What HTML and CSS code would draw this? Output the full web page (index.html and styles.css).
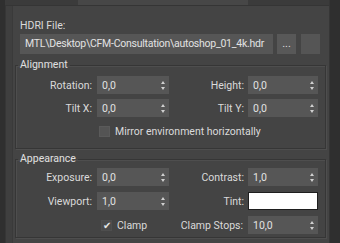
FILE: index.html
```html
<!DOCTYPE html>
<html lang="en">

<head>
    <meta charset="UTF-8">
    <title>HDRI Map Parameters</title>
    <link rel="stylesheet" href="styles.css">
</head>

<body>
    <div class="rollout">
        <div class="inner">
            <div class="topbar"><div class="tab"></div></div>

            <div class="file-block">
                <div class="caption">HDRI File:</div>
                <div class="file-row">
                    <div class="path">MTL\Desktop\CFM-Consultation\autoshop_01_4k.hdr</div>
                    <button class="btn">...</button>
                    <button class="btn blank"></button>
                </div>
            </div>

            <fieldset class="group align">
                <legend>Alignment</legend>
                <div class="grid">
                    <label class="lbl">Rotation:</label>
                    <div class="spin"><span>0,0</span><i class="arrows"></i></div>
                    <label class="lbl">Height:</label>
                    <div class="spin"><span>0,0</span><i class="arrows"></i></div>

                    <label class="lbl">Tilt X:</label>
                    <div class="spin"><span>0,0</span><i class="arrows"></i></div>
                    <label class="lbl">Tilt Y:</label>
                    <div class="spin"><span>0,0</span><i class="arrows"></i></div>

                    <div class="check-row wide">
                        <span class="box"></span>
                        <span>Mirror environment horizontally</span>
                    </div>
                </div>
            </fieldset>

            <fieldset class="group look">
                <legend>Appearance</legend>
                <div class="grid">
                    <label class="lbl">Exposure:</label>
                    <div class="spin"><span>0,0</span><i class="arrows"></i></div>
                    <label class="lbl">Contrast:</label>
                    <div class="spin"><span>1,0</span><i class="arrows"></i></div>

                    <label class="lbl">Viewport:</label>
                    <div class="spin"><span>1,0</span><i class="arrows"></i></div>
                    <label class="lbl">Tint:</label>
                    <div class="swatch"></div>

                    <div class="check-row">
                        <span class="box checked">&#10004;</span>
                        <span>Clamp</span>
                    </div>
                    <label class="lbl">Clamp Stops:</label>
                    <div class="spin"><span>10,0</span><i class="arrows"></i></div>
                </div>
            </fieldset>
        </div>
    </div>
</body>

</html>
```

FILE: styles.css
```css
body {
    margin: 0;
    padding: 0;
    background-color: #2f2f2f;
    font-family: Roboto, "Liberation Sans", sans-serif;
    font-size: 10.5px;
    color: #dadada;
    height: 243px;
    overflow: hidden;
}

.rollout {
    margin-left: 5px;
    width: 325px;
    height: 243px;
    box-sizing: border-box;
    background-color: #3f3f3f;
    border-left: 1px solid #363636;
    border-right: 1px solid #363636;
    padding-left: 6px;
}

.inner {
    height: 100%;
    background-color: #444;
    border-left: 1px solid #3a3a3a;
    padding-left: 2px;
    padding-right: 3px;
}

.topbar {
    height: 5px;
    margin-left: -10px;
    margin-right: -3px;
    background-color: #3b3b3b;
    border-bottom: 1px solid #353535;
}

.tab {
    margin-left: 73px;
    width: 170px;
    height: 5px;
    background-color: #474747;
}

/* file picker */
.file-block {
    padding-left: 5px;
}

.caption {
    margin-top: 12px;
    line-height: 15px;
}

.file-row {
    display: flex;
    align-items: center;
    margin-top: 1px;
    height: 20px;
}

.path {
    width: 253px;
    height: 20px;
    line-height: 20px;
    padding-left: 5px;
    box-sizing: border-box;
    background-color: #565656;
    white-space: nowrap;
    overflow: hidden;
    letter-spacing: -0.25px;
    color: #e2e2e2;
}

.btn {
    margin-left: 4px;
    width: 19px;
    height: 20px;
    padding: 0;
    border: none;
    background-color: #585858;
    color: #dcdcdc;
    font-family: inherit;
    font-size: 11px;
    line-height: 16px;
}

.btn.blank {
    margin-left: 5px;
    background-color: #555;
}

/* groups */
.group {
    margin: 5px 0 0 0;
    padding: 0;
    border: 1px solid #363636;
    box-shadow: inset 1px 1px 0 #4e4e4e, 1px 1px 0 #4e4e4e;
}

.group legend {
    margin-left: 2px;
    padding: 0 2px;
    line-height: 12px;
    color: #e0e0e0;
}

.grid {
    display: grid;
    grid-template-columns: 81px 72px 79px 70px;
    align-items: center;
}

.align .grid {
    padding: 5px 0 8px;
    row-gap: 5px;
}

.look {
    margin-top: 4px;
}

.look .grid {
    padding: 3px 0 3px;
    row-gap: 6px;
}

.lbl {
    text-align: right;
    padding-right: 5px;
    white-space: nowrap;
}

.grid .lbl:nth-of-type(even) {
    padding-right: 4px;
}

.spin {
    display: flex;
    align-items: center;
    justify-content: space-between;
    height: 18px;
    padding: 0 5px 0 5px;
    background-color: #565656;
    color: #e2e2e2;
}

.arrows {
    width: 0;
    height: 9px;
    position: relative;
    display: block;
}

.arrows::before,
.arrows::after {
    content: "";
    position: absolute;
    left: -3px;
    border-left: 2.5px solid transparent;
    border-right: 2.5px solid transparent;
}

.arrows::before {
    top: 0;
    border-bottom: 3px solid #d0d0d0;
}

.arrows::after {
    bottom: 0;
    border-top: 3px solid #d0d0d0;
}

.swatch {
    height: 18px;
    box-sizing: border-box;
    background-color: #fff;
    border: 1px solid #1e1e1e;
}

.check-row {
    grid-column: 2;
    display: flex;
    align-items: center;
    gap: 5px;
    height: 18px;
    padding-left: 4px;
}

.check-row.wide {
    grid-column: 2 / span 3;
    padding-left: 2px;
}

.box {
    width: 11px;
    height: 11px;
    box-sizing: border-box;
    background-color: #545454;
    border: 1px solid #5a5a5a;
    font-size: 10px;
    line-height: 10px;
    text-align: center;
    color: #e6e6e6;
}

.box.checked {
    background-color: #4a4a4a;
    border-color: #4e4e4e;
}
```
